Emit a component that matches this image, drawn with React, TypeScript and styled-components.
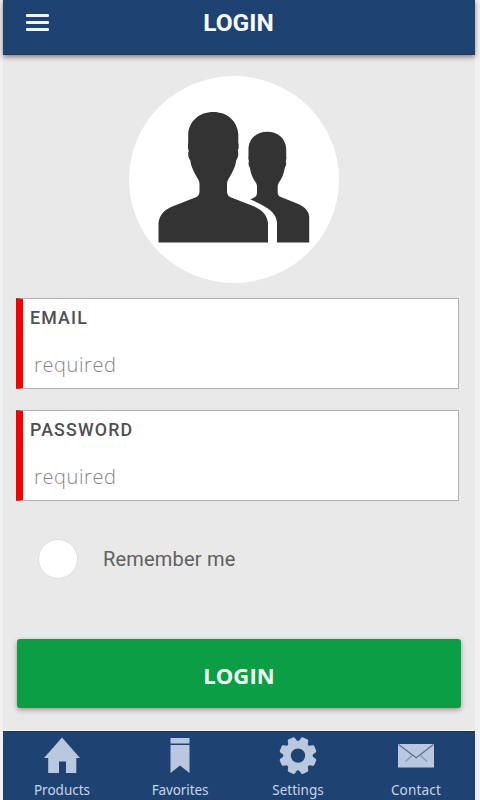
import React from "react";
import styled, { createGlobalStyle } from "styled-components";

const GlobalStyle = createGlobalStyle`
  *, *::before, *::after { box-sizing: border-box; }
  body { margin: 0; background: #f1f1f1; }
`;

const Screen = styled.div`
  width: 480px;
  height: 800px;
  overflow: hidden;
  padding: 0 5px 0 3px;
  background: #f1f1f1;
  font-family: Roboto, sans-serif;
`;

const Page = styled.div`
  display: flex;
  flex-direction: column;
  height: 800px;
  background: #e9e9e9;
`;

const Header = styled.header`
  display: grid;
  grid-template-columns: 60px 1fr 61px;
  align-items: start;
  flex: none;
  height: 55px;
  background: #1e4272;
  border-bottom: 1px solid #1b3761;
  box-shadow: 0 2px 5px rgba(70, 50, 50, 0.6);
`;

const MenuButton = styled.button`
  display: flex;
  flex-direction: column;
  gap: 4px;
  width: 23px;
  margin: 14px 0 0 23px;
  padding: 0;
  border: 0;
  background: none;
`;

const MenuBar = styled.span`
  height: 3px;
  border-radius: 1px;
  background: #f0f6ff;
`;

const Title = styled.h1`
  margin: 9px 0 0;
  text-align: center;
  color: #f8fbff;
  font-size: 24.5px;
  line-height: 28px;
  font-weight: 700;
`;

const Main = styled.main`
  display: flex;
  flex-direction: column;
  flex: 1;
  padding: 21px 14px 0 13px;
`;

const Avatar = styled.div`
  width: 210px;
  height: 207px;
  margin: 0 0 15px 113px;
  border-radius: 50%;
  background: #fff;
`;

const Field = styled.label`
  display: flex;
  flex-direction: column;
  flex: none;
  width: 443px;
  height: 91px;
  margin-bottom: 21px;
  padding: 8px 0 0 7px;
  background: #fff;
  border: 1px solid #b0b0b0;
  border-left: 7px solid #f90000;
`;

const FieldName = styled.span`
  color: #505050;
  font-size: 17.8px;
  line-height: 22px;
  font-weight: 500;
  letter-spacing: 1.15px;
`;

const Input = styled.input`
  width: 400px;
  height: 30px;
  margin: 20px 0 0 4px;
  padding: 0;
  border: 0;
  outline: 0;
  background: none;
  font: 300 20px "Open Sans", "Noto Sans", sans-serif;
  letter-spacing: 0.6px;
  &::placeholder { color: #868686; opacity: 1; }
`;

const Remember = styled.label`
  display: flex;
  align-items: center;
  gap: 25px;
  height: 40px;
  margin: 17px 0 0 22px;
  color: #606060;
  font-size: 20px;
  line-height: 24px;
  letter-spacing: 0.2px;
`;

const Radio = styled.span`
  width: 40px;
  height: 40px;
  border: 1px solid #dedede;
  border-radius: 50%;
  background: #fff;
`;

const Submit = styled.button`
  flex: none;
  width: 444px;
  height: 69px;
  margin: 60px 0 0 1px;
  padding: 3px 0 0;
  border: 0;
  border-radius: 3px;
  background: #0b9e44;
  box-shadow: 0 2px 5px rgba(70, 50, 50, 0.45);
  color: #f2fff6;
  font: 700 22px/30px "Open Sans", "Noto Sans", sans-serif;
  letter-spacing: 0.1px;
`;

const Nav = styled.nav`
  display: grid;
  grid-template-columns: repeat(4, 118px);
  flex: none;
  height: 69px;
  background: #1e4272;
  border-top: 1px solid #1a3764;
  box-shadow: 0 -1px 0 #f5f8fb;
`;

const NavItem = styled.a`
  display: flex;
  flex-direction: column;
  align-items: center;
  padding-top: 4px;
  color: #c8d6ea;
  font: 400 13.5px/18px "Noto Sans", sans-serif;
`;

const NavLabel = styled.span<{ $spacing: number }>`
  letter-spacing: ${(p) => p.$spacing}px;
`;

const NavIcon = styled.svg`
  display: block;
  width: 40px;
  height: 40px;
  margin-bottom: 5px;
  fill: #b9c8df;
`;

const People = () => (
  <svg width="210" height="207" viewBox="0 0 210 207" fill="#333">
    <path d="M84.3 36c14 0 24 9 25 22v9l.3 1v4l-.8 3c1 3 .4 7-1.500 9-1 8-5 14-8.300 20-.8 1.500-1 3-1 5v6c0 3 1 5 3 6l23 9c8 3 14 8 15 17v19.500H29.500V147c1-9 7-14 15-17l23-9c2-1 3-3 3-6v-6c0-2-.2-3.500-1-5-3.300-6-7.300-12-8.300-20-2-2-2.500-6-1.500-9l-.7-3v-4l.2-1v-9c1-13 11-22 25.100-22Z" />
    <path d="M138.300 55.700c11 0 18.200 7 18.900 16.500v7l.2 3-.6 3c.8 2.500.2 5-1 6.500-.8 6.500-3.300 11-6 15-.8 1.200-1.100 2.500-1.100 4v5c0 2.500.5 4 2.500 5l17.500 7c6 2.500 11 6.500 11.500 13v25.800H148V147c-.5-7-4-11-10-15-6-4-10-5.800-15-8l-2-.6c3-1 5.300-2.400 6.200-3.400.6-1 .8-3 .8-5v-4.300c0-1.500-.3-2.800-1.100-4-2.700-4-5.200-8.500-6-15-1.200-1.500-1.800-4-1-6.500l-.6-3 .2-3v-7c.7-9.500 7.800-16.500 18.800-16.500Z" />
  </svg>
);

const House = () => (
  <NavIcon viewBox="0 0 40 40">
    <path d="M20 1.500 38 22h-3.700v15H24V25.500h-7V37H6.200V22H2Z" />
  </NavIcon>
);

const Bookmark = () => (
  <NavIcon viewBox="0 0 40 40">
    <path d="M10.500 2h19v5.500h-19ZM10.500 9h19v28L20 29.500 10.500 37Z" />
  </NavIcon>
);

const Gear = () => (
  <NavIcon viewBox="0 0 40 40">
    <path
      fillRule="evenodd"
      d="M20 4.800A14.800 14.800 0 1 1 20 34.400 14.800 14.800 0 1 1 20 4.800ZM20 12.400A7.200 7.200 0 1 0 20 26.800 7.200 7.200 0 1 0 20 12.400Z"
    />
    {[22.5, 67.5, 112.5, 157.5, 202.5, 247.5, 292.5, 337.5].map((a) => (
      <path key={a} transform={`rotate(${a} 20 19.6)`} d="M14.800 8 16 2.500q.3-1.600 1.800-1.600h4.400q1.500 0 1.800 1.600L25.200 8Z" />
    ))}
  </NavIcon>
);

const Envelope = () => (
  <NavIcon viewBox="0 0 40 40">
    <rect x="2" y="8" width="36" height="23.5" />
    <g fill="none" stroke="#566f94" strokeWidth="1.2">
      <path d="m2.500 8.500 17.700 13.200L37.500 8.500" />
      <path d="m9.500 25.500 6.500-6M31 25.500l-6.500-6" stroke="#8196b5" />
    </g>
  </NavIcon>
);

export default function App() {
  return (
    <>
      <GlobalStyle />
      <Screen>
        <Page>
          <Header>
            <MenuButton aria-label="Menu">
              <MenuBar />
              <MenuBar />
              <MenuBar />
            </MenuButton>
            <Title>LOGIN</Title>
          </Header>
          <Main>
            <Avatar>
              <People />
            </Avatar>
            <Field>
              <FieldName>EMAIL</FieldName>
              <Input type="email" placeholder="required" />
            </Field>
            <Field>
              <FieldName>PASSWORD</FieldName>
              <Input type="password" placeholder="required" />
            </Field>
            <Remember>
              <Radio />
              Remember me
            </Remember>
            <Submit>LOGIN</Submit>
          </Main>
          <Nav>
            <NavItem><House /><NavLabel $spacing={0}>Products</NavLabel></NavItem>
            <NavItem><Bookmark /><NavLabel $spacing={-0.1}>Favorites</NavLabel></NavItem>
            <NavItem><Gear /><NavLabel $spacing={0}>Settings</NavLabel></NavItem>
            <NavItem><Envelope /><NavLabel $spacing={0.2}>Contact</NavLabel></NavItem>
          </Nav>
        </Page>
      </Screen>
    </>
  );
}
